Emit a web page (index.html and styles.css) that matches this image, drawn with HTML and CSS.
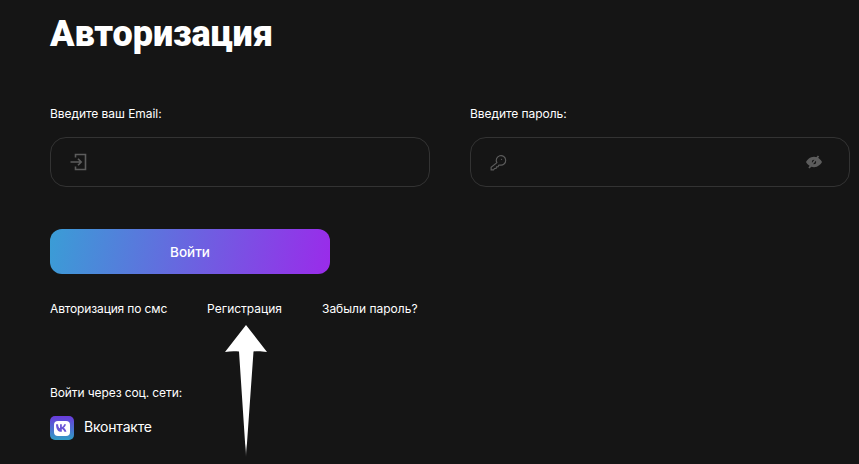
FILE: index.html
```html
<!DOCTYPE html>
<html lang="ru">
<head>
<meta charset="utf-8">
<title>Авторизация</title>
<link rel="stylesheet" href="styles.css">
</head>
<body>
<main class="page">
  <h1 class="title">Авторизация</h1>
  <div class="fields">
    <div class="field">
      <label class="label">Введите ваш Email:</label>
      <div class="input">
        <svg class="icon" width="18" height="18" viewBox="0 0 18 18" fill="none" stroke="#5c5c5c" stroke-width="1.6"><path d="M5.500 4.500V1.500H15.500V16.500H5.500V13.500"/><path d="M.5 9H11M8 5.800L11.200 9L8 12.200"/></svg>
      </div>
    </div>
    <div class="field">
      <label class="label">Введите пароль:</label>
      <div class="input">
        <svg class="icon" width="17" height="17" viewBox="0 0 18 18" fill="none" stroke="#5c5c5c" stroke-width="1.2"><path d="M7.300 9.200A5 5 0 1 1 10.600 11.600L9.200 11.800L8.600 13.400L7 13.600L6.400 15.200L4.800 15.400L3.800 16.800H1.200V14L7.300 9.200Z"/><circle cx="12.200" cy="5.600" r=".7" fill="#5c5c5c" stroke="none"/></svg>
        <svg class="icon" width="18" height="16" viewBox="0 0 18 16" fill="none"><path d="M9 2.800C13 2.800 16 6 17 8C16 10 13 13.200 9 13.200C5 13.200 2 10 1 8C2 6 5 2.800 9 2.800Z" fill="#5c5c5c"/><circle cx="9" cy="8" r="2.200" fill="#151515"/><path d="M13.500 2L4 14" stroke="#5c5c5c" stroke-width="1.800"/></svg>
      </div>
    </div>
  </div>
  <button class="submit" type="button">Войти</button>
  <nav class="links">
    <a class="link link-tight">Авторизация по смс</a>
    <a class="link">Регистрация</a>
    <a class="link">Забыли пароль?</a>
  </nav>
  <p class="social-title">Войти через соц. сети:</p>
  <div class="social">
    <span class="vk">
      <span class="vk-inner">
        <svg width="12" height="8" viewBox="0 0 14 9"><path d="M0 0H2.400C2.500 2.700 3.400 4.300 4.700 4.900V0H6.800V3.300C8 3.100 9 1.700 9.500 0H11.600C11.200 1.900 10.100 3.400 8.900 4.200C10.200 4.900 11.500 6.300 12.200 9H9.800C9.300 7.300 8.100 6 6.800 5.800V9H6.300C2.500 9 .2 6 0 0Z" fill="#6a56d6"/></svg>
      </span>
    </span>
    <span class="vk-name">Вконтакте</span>
  </div>
</main>
<svg class="arrow" width="44" height="132" viewBox="0 0 44 132">
  <defs>
    <linearGradient id="fade" x1="0" y1="0" x2="0" y2="1">
      <stop offset="0" stop-color="#fff"/>
      <stop offset=".9" stop-color="#fff"/>
      <stop offset="1" stop-color="#fff" stop-opacity=".2"/>
    </linearGradient>
  </defs>
  <path d="M22 0L43 27C37 26 33 26 29.500 26.500L22 132L15 26.500C11 26 6 26 1 27Z" fill="url(#fade)"/>
</svg>
</body>
</html>
```
FILE: styles.css
```css
* { box-sizing: border-box; }
html, body { margin: 0; height: 100%; }
body {
  background: #151515;
  color: #fff;
  font-family: "Inter", "Liberation Sans", sans-serif;
  overflow: hidden;
  position: relative;
}
.page { padding: 12px 0 0 50px; }
.title {
  margin: 0;
  font-family: "Roboto", "Liberation Sans", sans-serif;
  font-weight: 900;
  font-size: 36px;
  line-height: 44px;
  letter-spacing: -0.1px;
}
.fields { display: flex; gap: 40px; margin-top: 50px; }
.field { width: 380px; }
.label { display: block; font-size: 12px; line-height: 16px; letter-spacing: -0.05px; }
.input {
  margin-top: 15px;
  height: 50px;
  border: 1px solid #333;
  border-radius: 16px;
  display: flex;
  align-items: center;
  justify-content: space-between;
  padding: 0 26px 0 19px;
}
.icon { display: block; }
.submit {
  display: block;
  margin-top: 42px;
  width: 280px;
  height: 45px;
  border: 0;
  border-radius: 12px;
  background: linear-gradient(100deg, #3a9dd6 0%, #9a2bea 100%);
  color: #fff;
  font: 500 13.5px "Inter", sans-serif;
}
.links { display: flex; gap: 40px; margin-top: 27px; }
.link { font-size: 12px; line-height: 16px; color: #fff; }
.link-tight { letter-spacing: -0.14px; }
.social-title { margin: 68px 0 0; font-size: 12px; line-height: 16px; letter-spacing: -0.1px; }
.social { display: flex; align-items: center; gap: 10px; margin-top: 15px; }
.vk {
  width: 24px;
  height: 24px;
  border-radius: 5px;
  background: linear-gradient(180deg, #6a3bdc 0%, #2f9cc4 100%);
  display: flex;
  align-items: center;
  justify-content: center;
}
.vk-inner {
  width: 16px;
  height: 15px;
  border-radius: 4px;
  background: #fff;
  display: flex;
  align-items: center;
  justify-content: center;
}
.vk-name { font-size: 14px; line-height: 18px; letter-spacing: -0.2px; position: relative; top: -1px; }
.arrow { position: absolute; left: 224px; top: 325px; }
```
